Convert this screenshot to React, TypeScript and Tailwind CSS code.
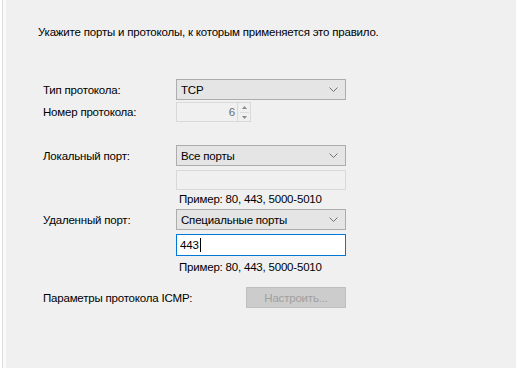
import React from 'react'

function Chevron() {
    return (
        <svg width="9" height="5" viewBox="0 0 9 5" className="shrink-0">
            <polyline
                points="0.5,0.5 4.5,4.5 8.5,0.5"
                fill="none"
                stroke="#707070"
                strokeWidth="1"
            />
        </svg>
    )
}

function Select({ value }: { value: string }) {
    return (
        <div className="flex h-[21px] w-[170px] items-center justify-between border border-[#adadad] bg-[#e5e5e5] pl-[4px] pr-[7px]">
            <span>{value}</span>
            <Chevron />
        </div>
    )
}

function Label({ children }: { children: React.ReactNode }) {
    return <div className="w-[133px] shrink-0">{children}</div>
}

function Example() {
    return (
        <div className="h-[18px] pl-[3px] leading-[18px]">
            Пример: 80, 443, 5000-5010
        </div>
    )
}

export default function App() {
    return (
        <div
            className="flex h-[368px] w-[518px] bg-white text-[11.5px] leading-[16px] tracking-[-0.2px] text-black"
            style={{ fontFamily: '"Liberation Sans", Arial, sans-serif' }}
        >
            <div className="w-[2px] shrink-0 bg-white" />
            <div className="w-[1px] shrink-0 bg-[#dcdcdc]" />
            <div className="w-[3px] shrink-0 bg-[#fafafa]" />
            <div className="flex-1 bg-[#f0f0f0] pl-[32px] pt-[24px]">
                <p>Укажите порты и протоколы, к которым применяется это правило.</p>

                <div className="mt-[39px] pl-[5px]">
                    <div className="flex items-center">
                        <Label>Тип протокола:</Label>
                        <Select value="TCP" />
                    </div>
                    <div className="mt-[2px] flex items-center">
                        <Label>Номер протокола:</Label>
                        <div className="flex h-[20px] w-[75px] items-center border border-[#d9d9d9] bg-[#f0f0f0]">
                            <span className="flex-1 pr-[2px] text-right text-[#6d6d6d]">6</span>
                            <div className="flex h-full w-[13px] flex-col items-center justify-center gap-[3px] border-l border-[#d9d9d9]">
                                <svg width="5" height="3" viewBox="0 0 5 3">
                                    <polygon points="0,3 2.5,0 5,3" fill="#8a8a8a" />
                                </svg>
                                <div className="h-[1px] w-[9px] bg-[#dcdcdc]" />
                                <svg width="5" height="3" viewBox="0 0 5 3">
                                    <polygon points="0,0 2.5,3 5,0" fill="#8a8a8a" />
                                </svg>
                            </div>
                        </div>
                    </div>

                    <div className="mt-[23px] flex items-center">
                        <Label>Локальный порт:</Label>
                        <Select value="Все порты" />
                    </div>
                    <div className="ml-[133px] mt-[4px] h-[20px] w-[170px] border border-[#d9d9d9] bg-[#f0f0f0]" />
                    <div className="ml-[133px]">
                        <Example />
                    </div>

                    <div className="mt-[1px] flex items-center">
                        <Label>Удаленный порт:</Label>
                        <Select value="Специальные порты" />
                    </div>
                    <div className="ml-[133px] mt-[4px] flex h-[22px] w-[170px] items-center border border-[#0078d7] bg-white pl-[3px]">
                        <span>443</span>
                        <span className="ml-[1px] h-[14px] w-[1px] bg-black" />
                    </div>
                    <div className="ml-[133px] mt-[2px]">
                        <Example />
                    </div>

                    <div className="mt-[11px] flex items-center">
                        <div className="w-[203px] shrink-0">Параметры протокола ICMP:</div>
                        <div className="flex h-[21px] w-[100px] items-center justify-center border border-[#bfbfbf] bg-[#cccccc] text-[#a0a0a0]">
                            Настроить...
                        </div>
                    </div>
                </div>
            </div>
            <div className="w-[2px] shrink-0 bg-white" />
        </div>
    )
}
